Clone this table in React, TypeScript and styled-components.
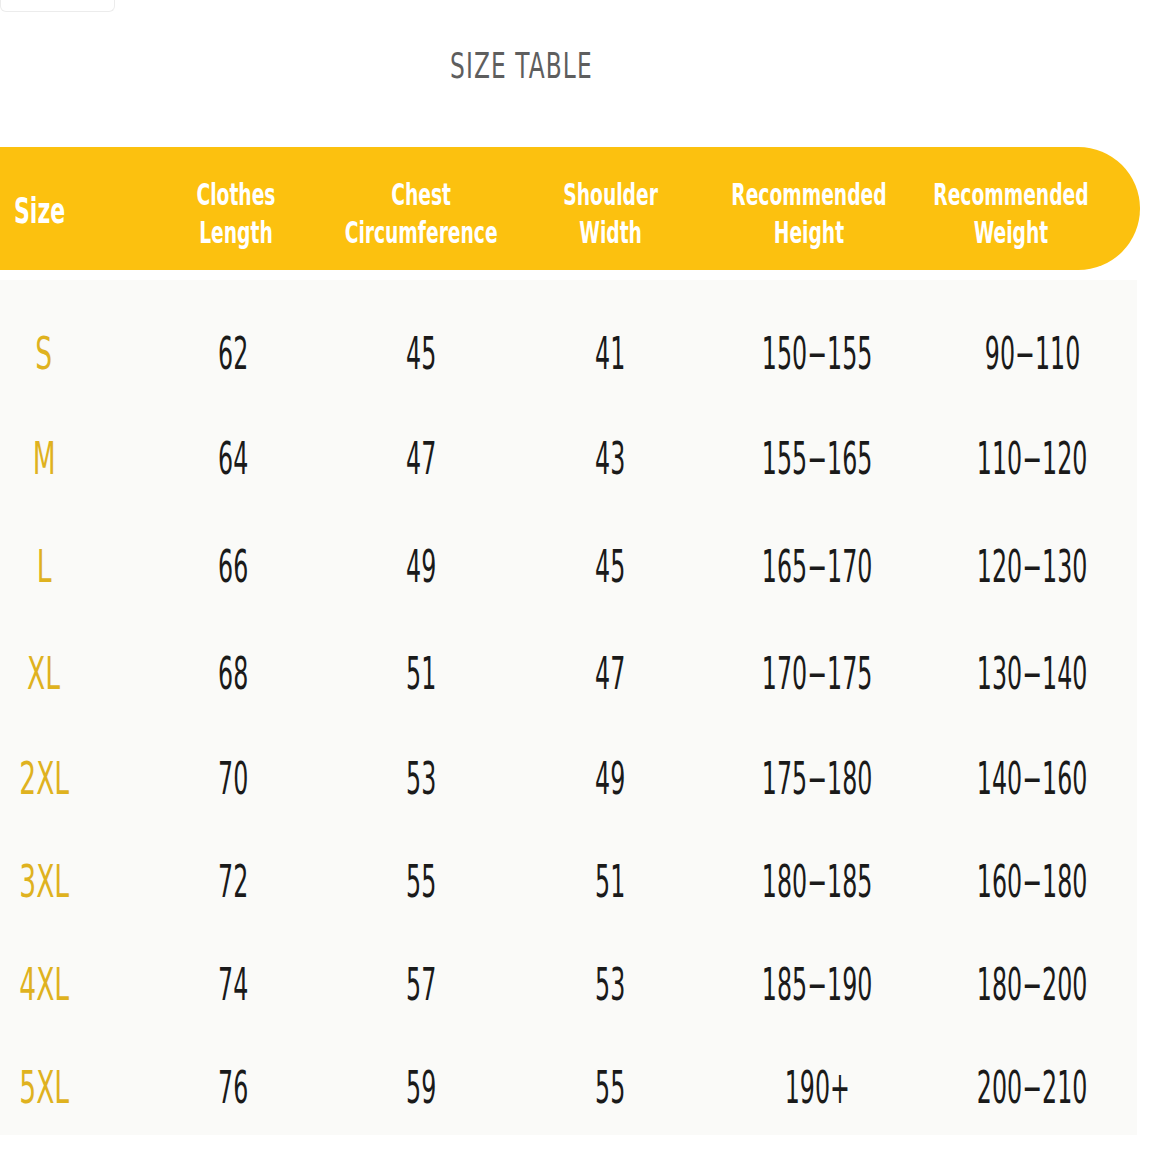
import React from 'react'
import styled, { createGlobalStyle } from 'styled-components'

const GlobalStyle = createGlobalStyle`
  html, body {
    margin: 0;
    padding: 0;
    background: #fff;
  }
  body {
    font-family: "DejaVu Sans Condensed", "Liberation Sans Narrow", "DejaVu Sans", sans-serif;
    font-stretch: condensed;
  }
`

const Page = styled.div`
  width: 1151px;
  height: 1150px;
  overflow: hidden;
  background: #fff;
`

const CornerTab = styled.div`
  width: 113px;
  height: 11px;
  border: 1px solid #ececec;
  border-top: none;
  border-radius: 0 0 6px 6px;
`

const Title = styled.h1`
  width: 1042px;
  margin: 30px 0 0;
  display: flex;
  justify-content: center;
  font-size: 35px;
  font-weight: 400;
  letter-spacing: 1.5px;
  color: #5e5e5e;
  line-height: 48px;
`

const Narrow = styled.span<{ $scale: number }>`
  display: inline-block;
  white-space: nowrap;
  transform: scaleX(${(p) => p.$scale});
`

const columns = '140px 188px 187px 195px 205px 225px'

const HeaderBar = styled.div`
  margin-top: 57px;
  width: 1140px;
  height: 123px;
  background: #fcc10f;
  border-radius: 0 62px 62px 0;
  display: grid;
  grid-template-columns: ${columns};
  align-items: center;
`

const HeadCell = styled.div<{ $shift?: number }>`
  display: flex;
  justify-content: center;
  color: #fff;
  font-size: 31px;
  font-weight: 700;
  line-height: 38px;
  text-align: center;
  padding-top: 8px;
  transform: translateX(${(p) => p.$shift ?? 0}px);
`

const SizeHead = styled.div`
  color: #fff;
  font-size: 35px;
  font-weight: 700;
  padding: 4px 0 0 14px;

  span {
    transform-origin: left center;
  }
`

const Panel = styled.div`
  margin-top: 10px;
  width: 1137px;
  height: 855px;
  padding-top: 21px;
  box-sizing: border-box;
  background: #fafaf8;
`

const Row = styled.div<{ $h: number }>`
  height: ${(p) => p.$h}px;
  display: grid;
  grid-template-columns: ${columns};
  align-items: center;
`

const SizeCell = styled.div`
  width: 88px;
  display: flex;
  justify-content: center;
  color: #dfb21f;
  font-size: 44px;
  font-weight: 400;
`

const ValueCell = styled.div<{ $shift?: number }>`
  display: flex;
  justify-content: center;
  color: #1a1a1a;
  font-size: 44px;
  font-weight: 400;
  transform: translateX(${(p) => p.$shift ?? 0}px);
`

const rows: [number, string[]][] = [
  [104, ['S', '62', '45', '41', '150−155', '90−110']],
  [107, ['M', '64', '47', '43', '155−165', '110−120']],
  [109, ['L', '66', '49', '45', '165−170', '120−130']],
  [105, ['XL', '68', '51', '47', '170−175', '130−140']],
  [104, ['2XL', '70', '53', '49', '175−180', '140−160']],
  [103, ['3XL', '72', '55', '51', '180−185', '160−180']],
  [102, ['4XL', '74', '57', '53', '185−190', '180−200']],
  [104, ['5XL', '76', '59', '55', '190+', '200−210']],
]

const heads: [string, string, number][] = [
  ['Clothes', 'Length', 2],
  ['Chest', 'Circumference', 0],
  ['Shoulder', 'Width', -2],
  ['Recommended', 'Height', -4],
  ['Recommended', 'Weight', -17],
]

const valueShift = [-1, 0, -2, 5, 5]

export default function App() {
  return (
    <Page>
      <GlobalStyle />
      <CornerTab />
      <Title>
        <Narrow $scale={0.74}>SIZE TABLE</Narrow>
      </Title>

      <HeaderBar>
        <SizeHead>
          <Narrow $scale={0.7}>Size</Narrow>
        </SizeHead>
        {heads.map(([a, b, shift], i) => (
          <HeadCell key={i} $shift={shift}>
            <Narrow $scale={0.67}>
              {a}
              <br />
              {b}
            </Narrow>
          </HeadCell>
        ))}
      </HeaderBar>

      <Panel>
        {rows.map(([h, r]) => (
          <Row key={r[0]} $h={h}>
            <SizeCell>
              <Narrow $scale={0.67}>{r[0]}</Narrow>
            </SizeCell>
            {r.slice(1).map((v, i) => (
              <ValueCell key={i} $shift={valueShift[i]}>
                <Narrow $scale={0.6}>{v}</Narrow>
              </ValueCell>
            ))}
          </Row>
        ))}
      </Panel>
    </Page>
  )
}
